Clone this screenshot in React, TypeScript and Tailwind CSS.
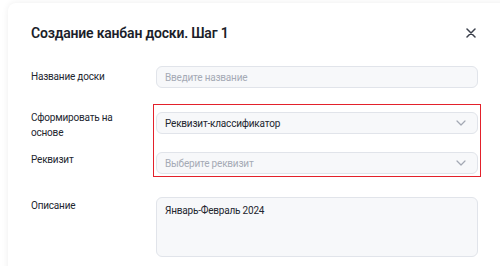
import React from 'react';

function Chevron() {
  return (
    <svg width="10" height="6" viewBox="0 0 10 6" fill="none" className="shrink-0">
      <path d="M1 1l4 4 4-4" stroke="#a3a8b3" strokeWidth="1.2" strokeLinecap="round" strokeLinejoin="round" />
    </svg>
  );
}

function Row({ label, children, className = '' }: { label: React.ReactNode; children: React.ReactNode; className?: string }) {
  return (
    <div className={`flex items-start ${className}`}>
      <div className="w-[125px] shrink-0 text-[10px] tracking-[-0.2px] leading-[15px] text-[#23262f]">{label}</div>
      <div className="w-[322px]">{children}</div>
    </div>
  );
}

export default function App() {
  return (
    <div className="w-[500px] h-[266px] overflow-hidden bg-white pt-[3px] pl-[8px]" style={{ fontFamily: 'Roboto, "Noto Sans", sans-serif' }}>
      <div className="relative w-[520px] h-[290px] rounded-tl-lg bg-white shadow-[0_0_7px_rgba(0,0,0,0.07)] pl-[23px] pt-[20px]">
        <div className="flex items-center justify-between w-[447px] h-[20px]">
          <h2 className="text-[14px] tracking-[-0.2px] leading-[20px] font-semibold text-[#1b1e2a]">Создание канбан доски. Шаг 1</h2>
          <svg width="10" height="10" viewBox="0 0 10 10" className="mr-[2px]">
            <path d="M1 1l8 8M9 1L1 9" stroke="#3b404c" strokeWidth="1.5" strokeLinecap="round" />
          </svg>
        </div>

        <Row className="mt-[23px]" label={<div className="pt-[3px]">Название доски</div>}>
          <div className="h-[22px] rounded-md border border-[#e1e4ea] bg-[#f7f8fa] pl-[8px] flex items-center text-[10px] tracking-[-0.2px] text-[#a5aab5]">
            Введите название
          </div>
        </Row>

        <Row className="mt-[24px]" label={<div className="-mt-[2px]">Сформировать на<br />основе</div>}>
          <div className="h-[22px] rounded-md border border-[#e1e4ea] bg-[#f7f8fa] pl-[8px] pr-[11px] flex items-center justify-between text-[10px] tracking-[-0.2px] text-[#23262f]">
            <span>Реквизит-классификатор</span>
            <Chevron />
          </div>
        </Row>

        <Row className="mt-[12px]" label={<div>Реквизит</div>}>
          <div className="h-[22px] rounded-md border border-[#e1e4ea] bg-[#f7f8fa] pl-[8px] pr-[11px] flex items-center justify-between text-[10px] tracking-[-0.2px] text-[#a5aab5]">
            <span>Выберите реквизит</span>
            <Chevron />
          </div>
        </Row>

        <Row className="mt-[23px]" label={<div className="pt-[1px]">Описание</div>}>
          <div className="h-[60px] rounded-md border border-[#e1e4ea] bg-[#f7f8fa] px-[8px] pt-[5px] text-[10px] tracking-[-0.2px] leading-[15px] text-[#23262f]">
            Январь-Февраль 2024
          </div>
        </Row>

        <div className="absolute left-[145px] top-[101px] w-[328px] h-[73px] border border-[#e3212b] pointer-events-none" />
      </div>
    </div>
  );
}
